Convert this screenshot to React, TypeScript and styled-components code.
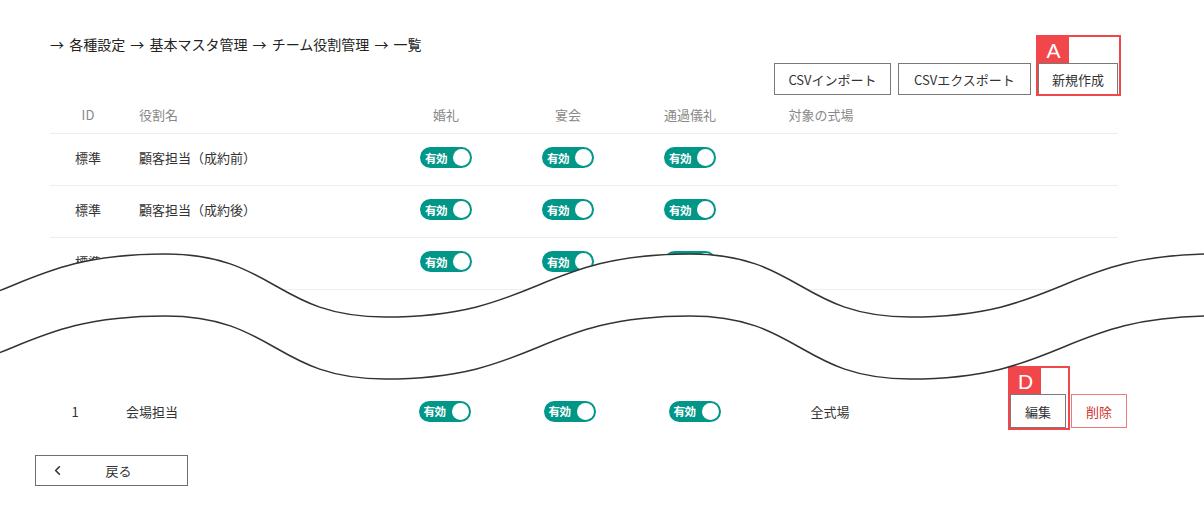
import React from 'react';
import styled, { createGlobalStyle } from 'styled-components';
import { ChevronLeft } from 'lucide-react';

const GlobalStyle = createGlobalStyle`
  html, body {
    margin: 0;
    background: #fff;
  }
  body {
    font-family: "Noto Sans CJK JP", "Noto Sans", sans-serif;
    color: #333;
  }
`;

const Page = styled.div`
  position: relative;
  width: 1204px;
  height: 529px;
  box-sizing: border-box;
  padding: 35px 86px 0 50px;
  overflow: hidden;
`;

const Breadcrumb = styled.div`
  font-size: 14px;
  line-height: 18px;
  word-spacing: 2px;
  color: #222;
`;

const Toolbar = styled.div`
  display: flex;
  justify-content: flex-end;
  gap: 7px;
  margin-top: 10px;
`;

const OutlineButton = styled.button<{ $danger?: boolean; $width?: number; $tall?: boolean }>`
  box-sizing: border-box;
  height: ${(p) => (p.$tall ? 34 : 32)}px;
  min-width: ${(p) => (p.$width ? `${p.$width}px` : 'auto')};
  padding: 0 13px;
  background: #fff;
  border: 1px solid ${(p) => (p.$danger ? '#e77b7b' : '#7a7a7a')};
  color: ${(p) => (p.$danger ? '#d32f2f' : '#333')};
  font-family: inherit;
  font-size: 13px;
  cursor: pointer;
`;

const Marked = styled.div`
  position: relative;
  display: flex;
`;

const MarkerFrame = styled.div<{ $bottom: number; $right: number }>`
  position: absolute;
  top: -28px;
  left: -2px;
  right: ${(p) => -p.$right}px;
  bottom: ${(p) => -p.$bottom}px;
  border: 2px solid #f2474a;
  pointer-events: none;
`;

const MarkerLabel = styled.span`
  display: flex;
  align-items: center;
  justify-content: center;
  width: 31px;
  height: 26px;
  background: #f2474a;
  color: #fff;
  font-family: "Liberation Sans", sans-serif;
  font-size: 21px;
  line-height: 1;
`;

const Marker = ({ label, right, bottom }: { label: string; right: number; bottom: number }) => (
  <MarkerFrame $right={right} $bottom={bottom}>
    <MarkerLabel>{label}</MarkerLabel>
  </MarkerFrame>
);

const topColumns = '76px 259px 122px 122px 122px 140px 1fr';

const HeadRow = styled.div`
  display: grid;
  grid-template-columns: ${topColumns};
  align-items: center;
  height: 39px;
  border-bottom: 1px solid #eeeeee;
  box-sizing: border-box;
  font-size: 13px;
  color: #888;
`;

const BodyRow = styled.div`
  display: grid;
  grid-template-columns: ${topColumns};
  align-items: center;
  height: 52px;
  padding-bottom: 4px;
  border-bottom: 1px solid #eeeeee;
  box-sizing: border-box;
  font-size: 13px;
  color: #333;
`;

const Cell = styled.div<{ $align?: 'left' | 'center'; $pad?: number }>`
  display: flex;
  justify-content: ${(p) => (p.$align === 'left' ? 'flex-start' : 'center')};
  padding-left: ${(p) => p.$pad ?? 0}px;
`;

const Toggle = styled.span`
  position: relative;
  display: inline-flex;
  align-items: center;
  box-sizing: border-box;
  width: 52px;
  height: 21px;
  padding-left: 5px;
  border-radius: 11px;
  background: #009688;
  color: #fff;
  font-size: 11.5px;
  font-weight: bold;
  letter-spacing: -0.5px;

  &::after {
    content: '';
    position: absolute;
    right: 2px;
    top: 2px;
    width: 17px;
    height: 17px;
    border-radius: 50%;
    background: #fff;
  }
`;

const Omitted = styled.div`
  height: 98px;
`;

const FooterRow = styled.div`
  display: grid;
  grid-template-columns: 50px 282px 125px 125px 125px 146px 1fr;
  align-items: center;
  height: 46px;
  margin-right: -9px;
  font-size: 13px;
  color: #333;
`;

const Actions = styled.div`
  display: flex;
  justify-content: flex-end;
  gap: 5px;
`;

const BackButton = styled.button`
  display: grid;
  grid-template-columns: 30px 1fr 30px;
  align-items: center;
  box-sizing: border-box;
  width: 153px;
  height: 31px;
  margin: 21px 0 0 -15px;
  padding: 0 0 0 14px;
  background: #fff;
  border: 1px solid #6f6f6f;
  color: #333;
  font-family: inherit;
  font-size: 13px;
  text-align: center;
  cursor: pointer;
`;

const WaveLayer = styled.svg`
  position: absolute;
  top: 0;
  left: 0;
  pointer-events: none;
`;

const wavePoints = [
  [-140, 317],
  [165, 254],
  [385, 317],
  [690, 254],
  [910, 317],
  [1215, 254],
  [1435, 317],
];

const curve = (offset: number, reverse = false) => {
  const pts = (reverse ? [...wavePoints].reverse() : wavePoints).map(([x, y]) => [x, y + offset]);
  let d = `${pts[0][0]} ${pts[0][1]}`;
  for (let i = 1; i < pts.length; i++) {
    const [x0, y0] = pts[i - 1];
    const [x1, y1] = pts[i];
    const h = (x1 - x0) / 2;
    d += ` C ${x0 + h} ${y0} ${x1 - h} ${y1} ${x1} ${y1}`;
  }
  return d;
};

const Wave = () => (
  <WaveLayer width="1204" height="529" viewBox="0 0 1204 529">
    <path d={`M ${curve(0)} L ${curve(62, true)} Z`} fill="#fff" />
    <path d={`M ${curve(0)}`} fill="none" stroke="#333" strokeWidth="1.5" />
    <path d={`M ${curve(62)}`} fill="none" stroke="#333" strokeWidth="1.5" />
  </WaveLayer>
);

const rows = [
  { id: '標準', name: '顧客担当（成約前）' },
  { id: '標準', name: '顧客担当（成約後）' },
  { id: '標準', name: '' },
];

const App = () => (
  <>
    <GlobalStyle />
    <Page>
      <Breadcrumb>→ 各種設定 → 基本マスタ管理 → チーム役割管理 → 一覧</Breadcrumb>
      <Toolbar>
        <OutlineButton $width={117}>CSVインポート</OutlineButton>
        <OutlineButton $width={133}>CSVエクスポート</OutlineButton>
        <Marked>
          <OutlineButton $width={78}>新規作成</OutlineButton>
          <Marker label="A" right={3} bottom={1} />
        </Marked>
      </Toolbar>
      <HeadRow>
        <Cell>ID</Cell>
        <Cell $align="left" $pad={13}>役割名</Cell>
        <Cell>婚礼</Cell>
        <Cell>宴会</Cell>
        <Cell>通過儀礼</Cell>
        <Cell>対象の式場</Cell>
        <Cell />
      </HeadRow>
      {rows.map((row, index) => (
        <BodyRow key={index}>
          <Cell>{row.id}</Cell>
          <Cell $align="left" $pad={13}>{row.name}</Cell>
          <Cell><Toggle>有効</Toggle></Cell>
          <Cell><Toggle>有効</Toggle></Cell>
          <Cell><Toggle>有効</Toggle></Cell>
          <Cell />
          <Cell />
        </BodyRow>
      ))}
      <Omitted />
      <FooterRow>
        <Cell>1</Cell>
        <Cell $align="left" $pad={26}>会場担当</Cell>
        <Cell><Toggle>有効</Toggle></Cell>
        <Cell><Toggle>有効</Toggle></Cell>
        <Cell><Toggle>有効</Toggle></Cell>
        <Cell>全式場</Cell>
        <Actions>
          <Marked>
            <OutlineButton $width={56} $tall>編集</OutlineButton>
            <Marker label="D" right={4} bottom={2} />
          </Marked>
          <OutlineButton $danger $width={56} $tall>削除</OutlineButton>
        </Actions>
      </FooterRow>
      <BackButton>
        <ChevronLeft size={15} strokeWidth={2.6} />
        <span>戻る</span>
        <span />
      </BackButton>
      <Wave />
    </Page>
  </>
);

export default App;
